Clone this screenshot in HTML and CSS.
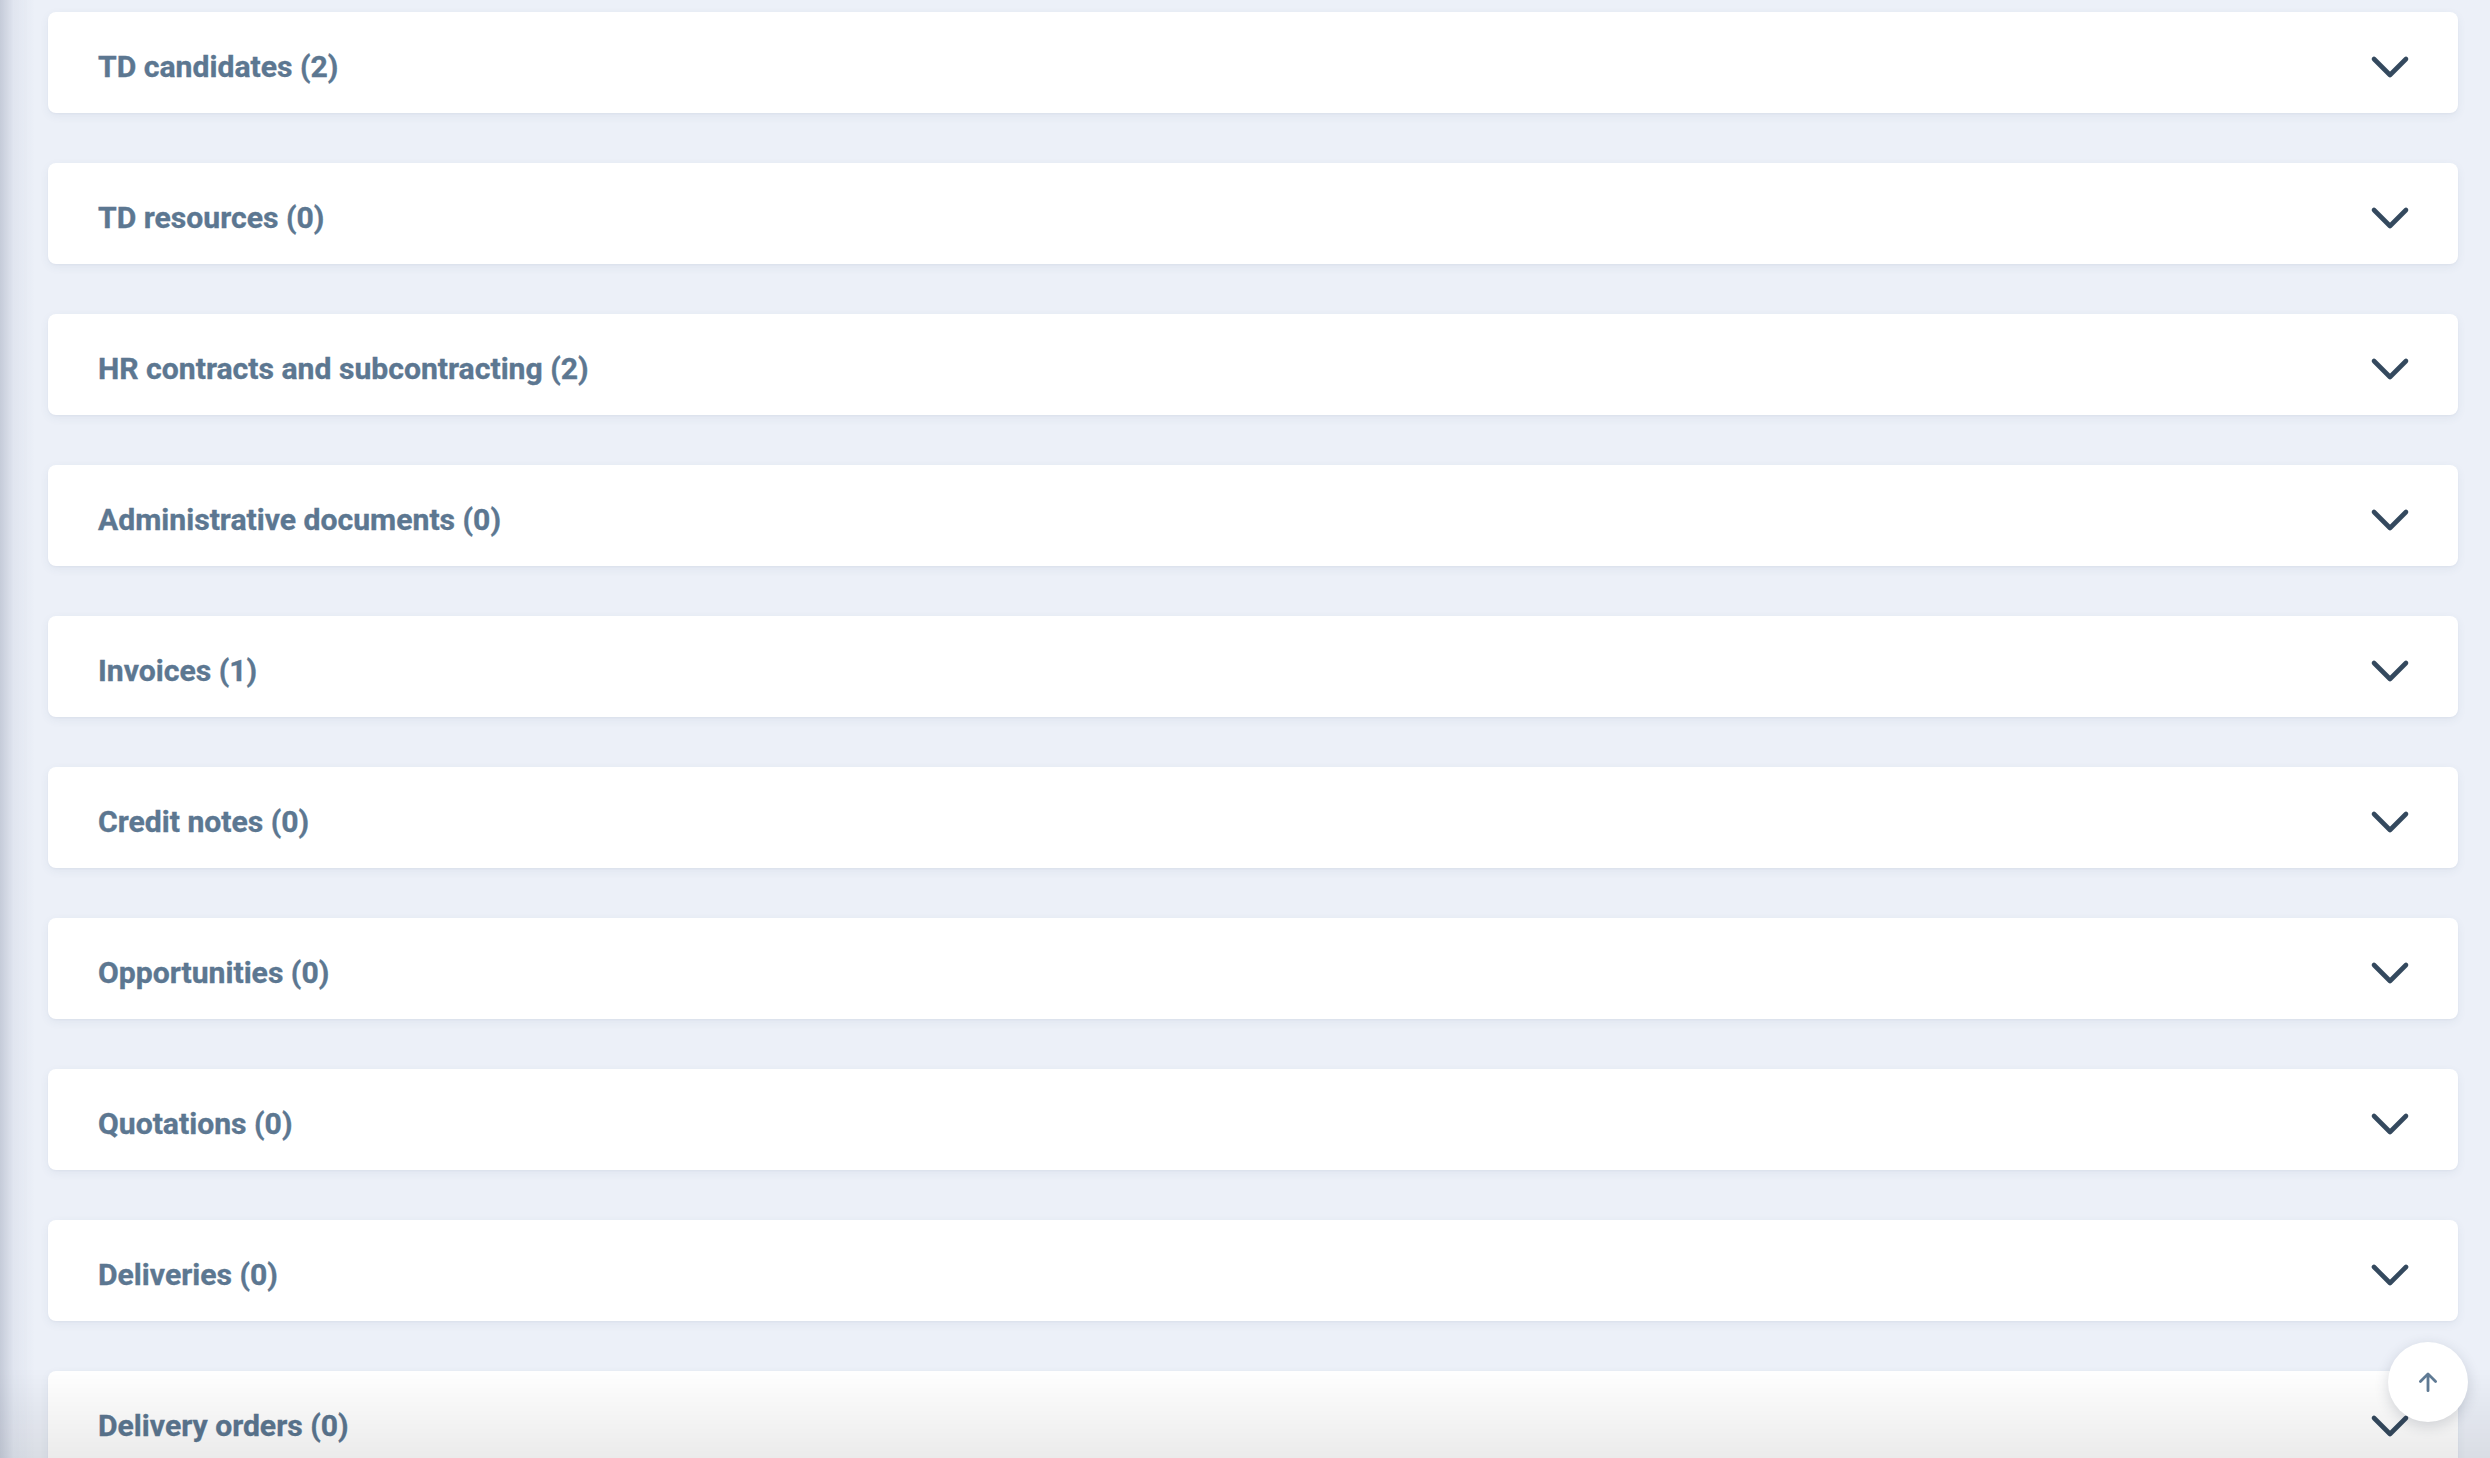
FILE: index.html
```html
<!DOCTYPE html>
<html lang="en">
<head>
<meta charset="utf-8">
<title>Sections</title>
<link rel="stylesheet" href="styles.css">
</head>
<body>
<div class="edge-shadow"></div>
<main class="sections">
  <div class="card"><span class="card-title">TD candidates (2)</span><svg class="chev" viewBox="0 0 40 24"><path d="M4 4 L20 20 L36 4"/></svg></div>
  <div class="card"><span class="card-title">TD resources (0)</span><svg class="chev" viewBox="0 0 40 24"><path d="M4 4 L20 20 L36 4"/></svg></div>
  <div class="card"><span class="card-title">HR contracts and subcontracting (2)</span><svg class="chev" viewBox="0 0 40 24"><path d="M4 4 L20 20 L36 4"/></svg></div>
  <div class="card"><span class="card-title">Administrative documents (0)</span><svg class="chev" viewBox="0 0 40 24"><path d="M4 4 L20 20 L36 4"/></svg></div>
  <div class="card"><span class="card-title">Invoices (1)</span><svg class="chev" viewBox="0 0 40 24"><path d="M4 4 L20 20 L36 4"/></svg></div>
  <div class="card"><span class="card-title">Credit notes (0)</span><svg class="chev" viewBox="0 0 40 24"><path d="M4 4 L20 20 L36 4"/></svg></div>
  <div class="card"><span class="card-title">Opportunities (0)</span><svg class="chev" viewBox="0 0 40 24"><path d="M4 4 L20 20 L36 4"/></svg></div>
  <div class="card"><span class="card-title">Quotations (0)</span><svg class="chev" viewBox="0 0 40 24"><path d="M4 4 L20 20 L36 4"/></svg></div>
  <div class="card"><span class="card-title">Deliveries (0)</span><svg class="chev" viewBox="0 0 40 24"><path d="M4 4 L20 20 L36 4"/></svg></div>
  <div class="card"><span class="card-title">Delivery orders (0)</span><svg class="chev" viewBox="0 0 40 24"><path d="M4 4 L20 20 L36 4"/></svg></div>
</main>
<div class="bottom-fade"></div>
<button class="to-top" aria-label="Back to top"><svg viewBox="0 0 24 24"><path d="M12 20 V5 M5 11.5 L12 4.5 L19 11.5"/></svg></button>
</body>
</html>
```

FILE: styles.css
```css
html, body {
  margin: 0;
  padding: 0;
  height: 1458px;
  overflow: hidden;
}
body {
  background: #ecf0f8;
  font-family: Roboto, "Liberation Sans", Arial, sans-serif;
  position: relative;
}
.edge-shadow {
  position: fixed;
  left: 0;
  top: 0;
  bottom: 0;
  width: 34px;
  background: linear-gradient(to right, rgba(150,158,178,0.45), rgba(190,198,215,0.25) 40%, rgba(236,240,248,0) 100%);
  pointer-events: none;
  z-index: 5;
}
.sections {
  display: flex;
  flex-direction: column;
  gap: 50px;
  padding: 12px 32px 0 48px;
}
.card {
  background: #ffffff;
  height: 101px;
  border-radius: 8px;
  box-shadow: 0 3px 10px rgba(60, 80, 120, 0.07), 0 1px 2px rgba(60, 80, 120, 0.04);
  display: flex;
  align-items: center;
  justify-content: space-between;
  padding: 0 48px 0 50px;
  flex-shrink: 0;
}
.card-title {
  color: #5c7791;
  font-weight: 700;
  font-size: 30.15px;
  letter-spacing: 0;
  padding-top: 8px;
  -webkit-text-stroke: 0.35px #5c7791;
}
.chev {
  width: 40px;
  height: 24px;
  fill: none;
  stroke: #34495e;
  stroke-width: 4.6;
  stroke-linecap: round;
  stroke-linejoin: round;
  margin-top: 8px;
}
.bottom-fade {
  position: fixed;
  left: 0;
  right: 0;
  bottom: 0;
  height: 90px;
  background: linear-gradient(to bottom, rgba(0,0,0,0), rgba(0,0,0,0.08));
  pointer-events: none;
  z-index: 4;
}
.to-top {
  position: fixed;
  left: 2388px;
  top: 1342px;
  width: 80px;
  height: 80px;
  border-radius: 50%;
  border: none;
  background: #ffffff;
  box-shadow: 0 4px 14px rgba(40, 50, 70, 0.18);
  display: flex;
  align-items: center;
  justify-content: center;
  padding: 0;
  z-index: 6;
}
.to-top svg {
  width: 26px;
  height: 26px;
  fill: none;
  stroke: #5f7a94;
  stroke-width: 2.6;
  stroke-linecap: round;
  stroke-linejoin: round;
}
```
